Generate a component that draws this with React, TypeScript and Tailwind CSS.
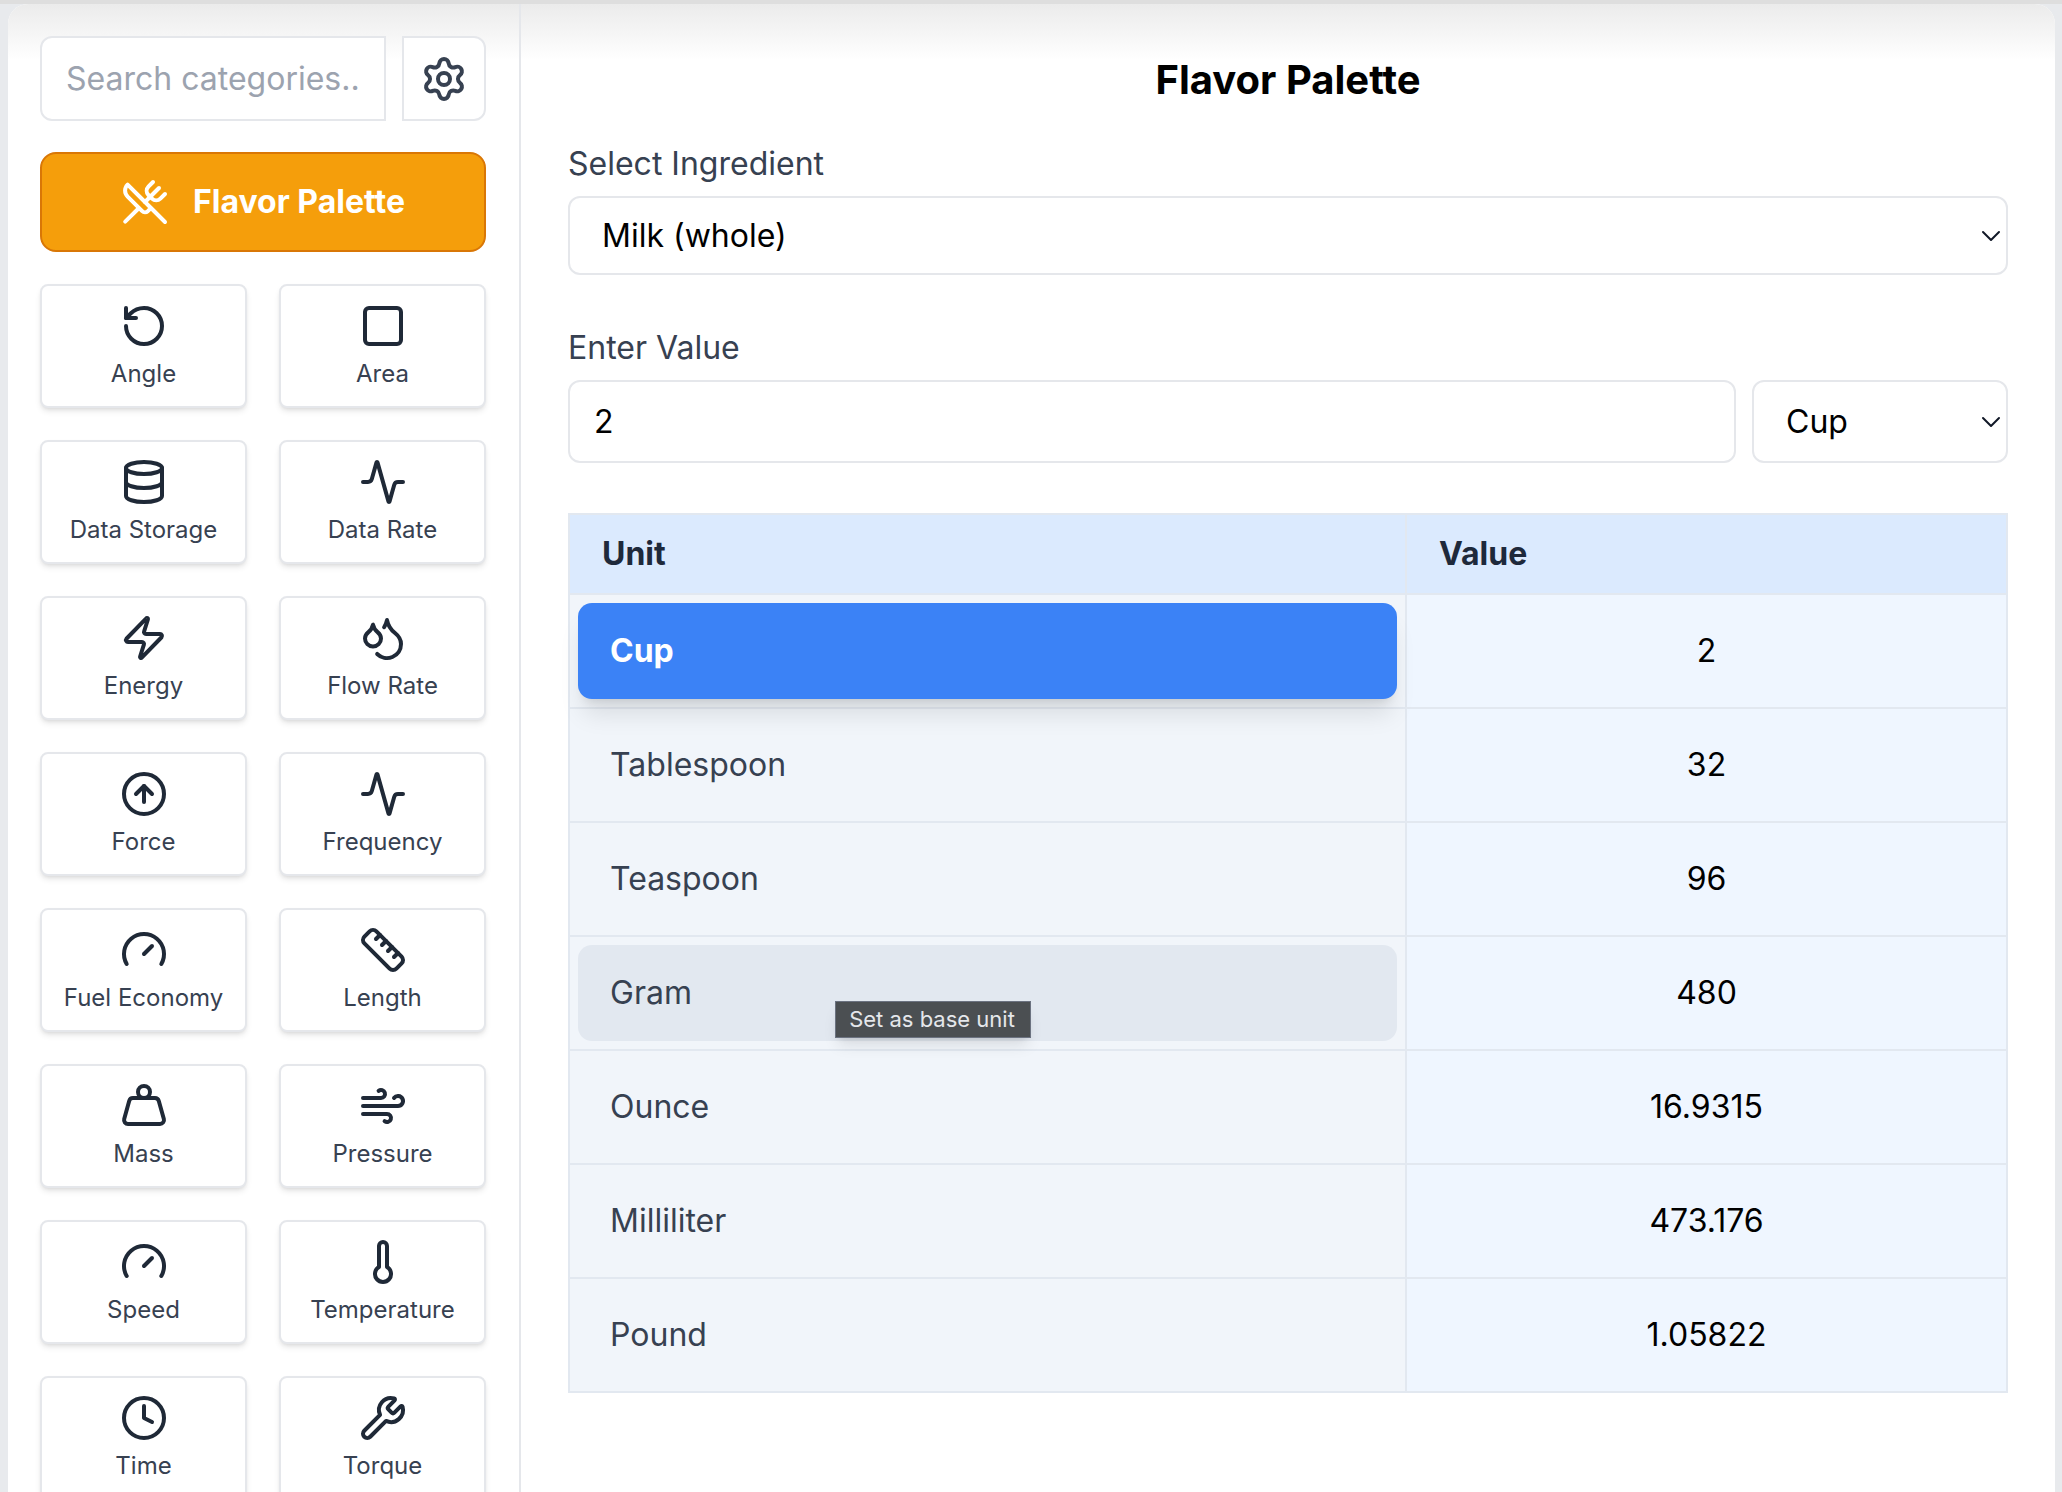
import {
  Activity,
  CircleArrowUp,
  Clock,
  Database,
  Droplets,
  Gauge,
  RotateCcw,
  Ruler,
  Settings,
  Square,
  Thermometer,
  UtensilsCrossed,
  Weight,
  Wind,
  Wrench,
  Zap,
  ChevronDown,
} from "lucide-react";

const categories = [
  { name: "Angle", icon: RotateCcw },
  { name: "Area", icon: Square },
  { name: "Data Storage", icon: Database },
  { name: "Data Rate", icon: Activity },
  { name: "Energy", icon: Zap },
  { name: "Flow Rate", icon: Droplets },
  { name: "Force", icon: CircleArrowUp },
  { name: "Frequency", icon: Activity },
  { name: "Fuel Economy", icon: Gauge },
  { name: "Length", icon: Ruler },
  { name: "Mass", icon: Weight },
  { name: "Pressure", icon: Wind },
  { name: "Speed", icon: Gauge },
  { name: "Temperature", icon: Thermometer },
  { name: "Time", icon: Clock },
  { name: "Torque", icon: Wrench },
];

const rows = [
  { unit: "Cup", value: "2" },
  { unit: "Tablespoon", value: "32" },
  { unit: "Teaspoon", value: "96" },
  { unit: "Gram", value: "480" },
  { unit: "Ounce", value: "16.9315" },
  { unit: "Milliliter", value: "473.176" },
  { unit: "Pound", value: "1.05822" },
];

/** Sidebar with search and category grid */
function Sidebar() {
  return (
    <aside className="relative w-[513px] shrink-0 border-r-2 border-[#e5e7eb] pl-[32px] pr-[33px] pt-[32px]">
      <div className="flex gap-[16px]">
        <input
          placeholder="Search categories..."
          className="h-[85px] w-[346px] rounded-l-[12px] border-2 border-[#e5e7eb] bg-white pl-[24px] pr-[25px] text-[32px] text-gray-800 outline-none placeholder:text-[#9ca3af]"
        />
        <button className="flex h-[85px] w-[84px] items-center justify-center rounded-r-[12px] border-2 border-[#e5e7eb] bg-white">
          <Settings className="h-[48px] w-[48px] text-[#374151]" />
        </button>
      </div>

      <button className="mt-[31px] flex h-[100px] w-full items-center justify-center gap-[24px] rounded-[16px] border-2 border-[#d97706] bg-[#f59e0b] text-[32px] font-bold text-white">
        <UtensilsCrossed className="h-[48px] w-[48px]" />
        Flavor Palette
      </button>

      <div className="mt-[32px] grid grid-cols-2 gap-x-[32px] gap-y-[32px]">
        {categories.map((cat) => (
          <button
            key={cat.name}
            className="flex h-[124px] flex-col items-center rounded-[8px] border-2 border-[#e5e7eb] bg-white pt-[16px] shadow-md"
          >
            <cat.icon className="h-[48px] w-[48px] text-[#1f2937]" />
            <span className="mt-[8px] text-[24px] leading-[32px] text-[#374151]">{cat.name}</span>
          </button>
        ))}
      </div>
    </aside>
  );
}

/** Select with a drawn chevron */
function UnitSelect({ value, className }: { value: string; className: string }) {
  return (
    <div className={`relative ${className}`}>
      <select className="h-full w-full appearance-none rounded-[12px] border-2 border-[#e5e7eb] bg-white pl-[32px] text-[32px] text-black outline-none">
        <option>{value}</option>
      </select>
      <ChevronDown
        strokeWidth={1.5}
        className="pointer-events-none absolute right-[1px] top-1/2 h-[32px] w-[32px] -translate-y-1/2 text-[#111827]"
      />
    </div>
  );
}

function ConversionTable() {
  return (
    <table className="mt-[50px] w-[1440px] table-fixed border-collapse text-[32px]">
      <thead>
        <tr className="h-[80px] bg-[#dbeafe] text-left font-bold text-[#1e293b]">
          <th className="w-[837px] border-2 border-[#e2e8f0] pl-[32px]">Unit</th>
          <th className="border-2 border-[#e2e8f0] pl-[32px]">Value</th>
        </tr>
      </thead>
      <tbody>
        {rows.map((row) => (
          <tr key={row.unit} className="h-[114px] bg-[#eff6ff]">
            <td className="border-2 border-[#e2e8f0] bg-[#f1f5fa] p-[8px]">
              {row.unit === "Cup" ? (
                <div className="relative z-10 flex h-[96px] items-center rounded-[14px] bg-[#3b82f6] pl-[32px] font-bold text-white shadow-xl">
                  {row.unit}
                </div>
              ) : row.unit === "Gram" ? (
                <div className="relative flex h-[96px] items-center rounded-[14px] bg-[#e2e8f0] pl-[32px] text-[#374151]">
                  {row.unit}
                  <div className="absolute left-[257px] top-[56px] flex h-[37px] w-[196px] items-center justify-center border border-[#6b7280] bg-[#4b4f52] pr-[2px] text-[22px] text-[#e5e7eb] shadow-lg">
                    Set as base unit
                  </div>
                </div>
              ) : (
                <div className="flex h-[96px] items-center pl-[32px] text-[#374151]">{row.unit}</div>
              )}
            </td>
            <td className="border-2 border-[#e2e8f0] text-center text-black">{row.value}</td>
          </tr>
        ))}
      </tbody>
    </table>
  );
}

export default function App() {
  return (
    <div className="h-[1492px] w-[2062px] overflow-hidden border-t-[4px] border-[#dedede] bg-[#e8eaed] pl-[8px] pr-[7px] font-['Inter',sans-serif]">
      <div className="relative flex h-full overflow-hidden rounded-t-[20px] bg-white">
        {/* Soft shade along the top edge */}
        <div className="pointer-events-none absolute inset-x-0 top-0 h-[56px] bg-gradient-to-b from-[#ebebeb] to-white" />
        <div className="relative flex h-full w-full">
          <Sidebar />
          <main className="pl-[47px] pt-[52px]">
            <h1 className="w-[1440px] text-center text-[40px] font-bold leading-[48px] text-black">Flavor Palette</h1>
            <label className="mt-[36px] block text-[32px] leading-[48px] text-[#374151]">Select Ingredient</label>
            <UnitSelect value="Milk (whole)" className="mt-[8px] h-[79px] w-[1440px]" />
            <label className="mt-[49px] block text-[32px] leading-[48px] text-[#374151]">Enter Value</label>
            <div className="mt-[8px] flex h-[83px] w-[1440px] gap-[16px]">
              <input
                defaultValue="2"
                className="h-full w-[1168px] rounded-[12px] border-2 border-[#e5e7eb] bg-white pl-[24px] text-[32px] text-black outline-none"
              />
              <UnitSelect value="Cup" className="h-full w-[256px]" />
            </div>
            <ConversionTable />
          </main>
        </div>
      </div>
    </div>
  );
}
